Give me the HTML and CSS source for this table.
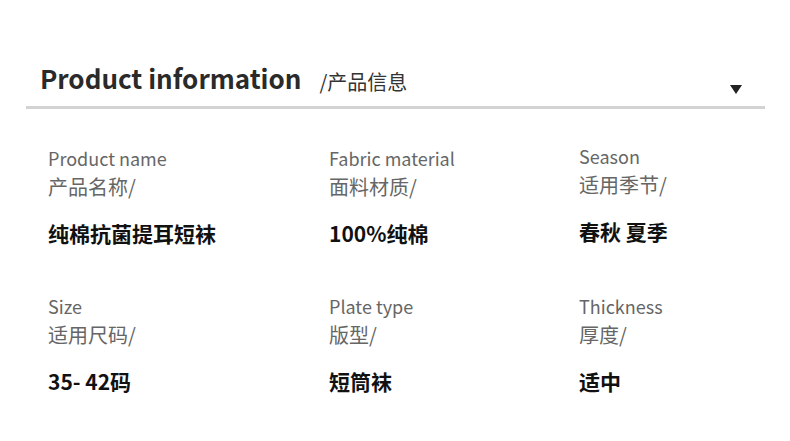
FILE: index.html
```html
<!DOCTYPE html>
<html lang="zh">
<head>
<meta charset="utf-8">
<link rel="stylesheet" href="styles.css">
</head>
<body>
<div class="page">
  <div class="header">
    <h1 class="title">Product information</h1>
    <span class="subtitle">/产品信息</span>
    <span class="arrow"></span>
  </div>
  <div class="grid">
    <div class="item">
      <div class="en">Product name</div>
      <div class="zh">产品名称/</div>
      <div class="val">纯棉抗菌提耳短袜</div>
    </div>
    <div class="item">
      <div class="en">Fabric material</div>
      <div class="zh">面料材质/</div>
      <div class="val">100%纯棉</div>
    </div>
    <div class="item up">
      <div class="en">Season</div>
      <div class="zh">适用季节/</div>
      <div class="val">春秋 夏季</div>
    </div>
    <div class="item">
      <div class="en">Size</div>
      <div class="zh">适用尺码/</div>
      <div class="val">35- 42码</div>
    </div>
    <div class="item">
      <div class="en">Plate type</div>
      <div class="zh">版型/</div>
      <div class="val">短筒袜</div>
    </div>
    <div class="item">
      <div class="en">Thickness</div>
      <div class="zh">厚度/</div>
      <div class="val">适中</div>
    </div>
  </div>
</div>
</body>
</html>
```
FILE: styles.css
```css
* { box-sizing: border-box; }
html, body { margin: 0; padding: 0; background: #fff; }
body {
  font-family: "Noto Sans CJK SC", "Noto Sans", sans-serif;
  width: 790px;
  height: 441px;
  overflow: hidden;
}
.page { padding-top: 58px; }
.header {
  margin: 0 25px 0 26px;
  padding: 0 0 0 14px;
  height: 51px;
  border-bottom: 3px solid #d3d3d3;
  display: flex;
  align-items: flex-start;
}
.title {
  margin: 0;
  font-size: 26px;
  font-weight: 700;
  line-height: 40px;
  color: #2a2a2a;
  letter-spacing: 0;
}
.subtitle {
  margin-left: 18px;
  font-size: 20px;
  line-height: 30px;
  margin-top: 9px;
  color: #333;
}
.arrow {
  margin-left: auto;
  margin-right: 23px;
  margin-top: 27px;
  width: 0;
  height: 0;
  border-left: 6px solid transparent;
  border-right: 6px solid transparent;
  border-top: 9px solid #222;
}
.grid {
  display: grid;
  grid-template-columns: 281px 250px 1fr;
  padding-left: 48px;
  padding-top: 35px;
  row-gap: 44px;
}
.item { display: flex; flex-direction: column; }
.item.up { margin-top: -2px; }
.en {
  font-size: 18px;
  line-height: 28px;
  color: #666;
}
.zh {
  font-size: 20px;
  line-height: 30px;
  color: #666;
}
.val {
  margin-top: 16px;
  font-size: 21px;
  line-height: 30px;
  font-weight: 700;
  color: #111;
}
```
